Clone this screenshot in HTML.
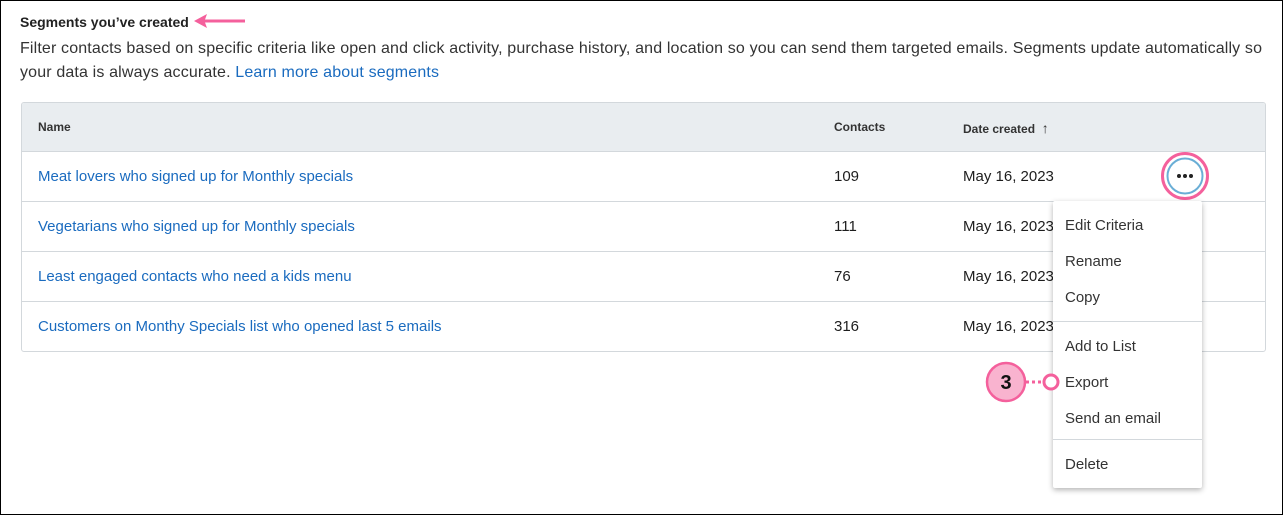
<!DOCTYPE html>
<html><head><meta charset="utf-8"><style>
*{margin:0;padding:0;box-sizing:border-box}
body{width:1283px;height:515px;background:#fff;font-family:"Liberation Sans",sans-serif;color:#1d1d1d;position:relative;overflow:hidden}
.frame{position:absolute;left:0;top:0;width:1283px;height:515px;border:1px solid #000}
.abs{position:absolute;white-space:nowrap}
h1{position:absolute;left:20px;top:14px;font-size:14px;font-weight:bold;color:#222}
.desc{position:absolute;left:20px;top:37px;width:1255px;font-size:16px;line-height:24px;color:#333;letter-spacing:0.15px}
a{color:#1a6bbf;text-decoration:none}
.table{position:absolute;left:21px;top:102px;width:1245px;height:250px;border:1px solid #d3d8dc;border-radius:3px;overflow:hidden}
.hdr{position:absolute;left:0;top:0;width:100%;height:49px;background:#e9edf0;border-bottom:1px solid #d3d8dc}
.row{position:absolute;left:0;width:100%;height:50px;border-bottom:1px solid #d3d8dc;font-size:15px}
.row span{position:absolute;top:16px}
.hdr span{position:absolute;top:17px;font-size:12px;font-weight:bold;color:#333}
.menu{position:absolute;left:1053px;top:201px;width:149px;height:287px;background:#fff;box-shadow:0 2px 6px rgba(0,0,0,.3);border-radius:2px;font-size:15px;color:#333}
.menu div.i{position:absolute;left:12px}
.menu hr{position:absolute;left:0;width:100%;border:0;border-top:1px solid #d3d8dc}
</style></head><body>
<div class="frame"></div>
<h1>Segments you’ve created</h1>
<svg class="abs" style="left:193px;top:13px" width="55" height="16"><path d="M1 8 L14 1 L12 6.5 L52 6.5 L52 9.5 L12 9.5 L14 15 Z" fill="#f4609c"/></svg>
<div class="desc">Filter contacts based on specific criteria like open and click activity, purchase history, and location so you can send them targeted emails. Segments update automatically so your data is always accurate. <a>Learn more about segments</a></div>
<div class="table">
<div class="hdr"><span style="left:16px">Name</span><span style="left:812px">Contacts</span><span style="left:941px">Date created &nbsp;<b style="font-size:14px">↑</b></span></div>
<div class="row" style="top:49px"><span style="left:16px"><a>Meat lovers who signed up for Monthly specials</a></span><span style="left:812px">109</span><span style="left:941px">May 16, 2023</span></div>
<div class="row" style="top:99px"><span style="left:16px"><a>Vegetarians who signed up for Monthly specials</a></span><span style="left:812px">111</span><span style="left:941px">May 16, 2023</span></div>
<div class="row" style="top:149px"><span style="left:16px"><a>Least engaged contacts who need a kids menu</a></span><span style="left:812px">76</span><span style="left:941px">May 16, 2023</span></div>
<div class="row" style="top:199px;border-bottom:0"><span style="left:16px"><a>Customers on Monthy Specials list who opened last 5 emails</a></span><span style="left:812px">316</span><span style="left:941px">May 16, 2023</span></div>
</div>
<svg class="abs" style="left:1160px;top:151px" width="50" height="50">
<circle cx="25" cy="25" r="22.5" fill="#fff" stroke="#f4609c" stroke-width="3"/>
<circle cx="25" cy="25" r="17.5" fill="#fff" stroke="#6aaed6" stroke-width="2"/>
<circle cx="19" cy="25" r="2" fill="#222"/><circle cx="25" cy="25" r="2" fill="#222"/><circle cx="31" cy="25" r="2" fill="#222"/>
</svg>
<div class="menu">
<div class="i" style="top:16px">Edit Criteria</div>
<div class="i" style="top:52px">Rename</div>
<div class="i" style="top:88px">Copy</div>
<hr style="top:120px">
<div class="i" style="top:137px">Add to List</div>
<div class="i" style="top:173px">Export</div>
<div class="i" style="top:209px">Send an email</div>
<hr style="top:238px">
<div class="i" style="top:255px">Delete</div>
</div>
<svg class="abs" style="left:984px;top:360px" width="80" height="44">
<line x1="42" y1="22" x2="58" y2="22" stroke="#f4609c" stroke-width="3" stroke-dasharray="3,3"/>
<circle cx="22" cy="22" r="19" fill="#f9b3cf" stroke="#f4609c" stroke-width="2.5"/>
<text x="22" y="29" text-anchor="middle" font-family="Liberation Sans" font-weight="bold" font-size="20" fill="#111">3</text>
<circle cx="67" cy="22" r="7" fill="#fff" stroke="#f4609c" stroke-width="3"/>
</svg>
</body></html>
